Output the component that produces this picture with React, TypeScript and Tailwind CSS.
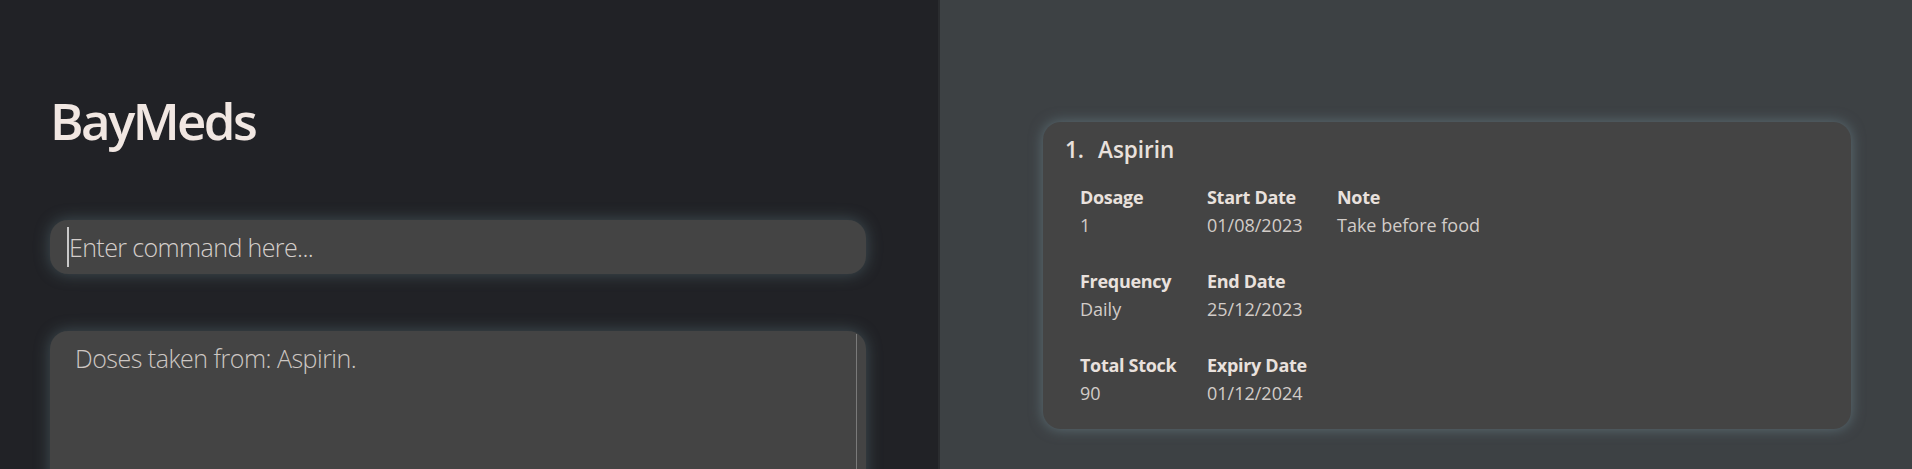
const fields = [
  [
    { label: "Dosage", value: "1" },
    { label: "Start Date", value: "01/08/2023" },
    { label: "Note", value: "Take before food" },
  ],
  [
    { label: "Frequency", value: "Daily" },
    { label: "End Date", value: "25/12/2023" },
  ],
  [
    { label: "Total Stock", value: "90" },
    { label: "Expiry Date", value: "01/12/2024" },
  ],
];

const font = { fontFamily: '"Open Sans", "Noto Sans", sans-serif' };

const App = () => {
  return (
    <div className="flex h-[469px] w-full overflow-hidden" style={font}>
      {/* command side */}
      <div className="w-[940px] shrink-0 bg-[#212226] border-r-2 border-[#2a2c2f] px-[50px] pt-[90px] pr-[72px]">
        <h1 className="text-[51px] leading-[60px] font-semibold text-[#f1e7e2] tracking-[-2.6px]">
          BayMeds
        </h1>

        <div className="mt-[70px] h-[54px] rounded-[18px] bg-[#444444] shadow-[0_0_16px_rgba(105,135,145,0.45)] flex items-center pl-[17px]">
          <span className="w-[2px] h-[40px] bg-[#c9c9c9]" />
          <span className="pt-[2px] text-[25px] font-light text-[#d4cecb] tracking-[-0.6px]">
            Enter command here...
          </span>
        </div>

        <div className="mt-[57px] h-[200px] rounded-t-[18px] bg-[#444444] shadow-[0_0_16px_rgba(105,135,145,0.45)] flex">
          <p className="flex-1 pl-[25px] pt-[9px] text-[25px] leading-[36px] font-light text-[#cdc7c3] tracking-[-0.5px]">
            Doses taken from: Aspirin.
          </p>
          <div className="w-[1px] mt-[3px] mr-[9px] bg-[#7a7a7a]" />
        </div>
      </div>

      {/* list side */}
      <div className="flex-1 bg-[#3d4144] pl-[103px] pr-[61px] pt-[122px]">
        <div className="h-[307px] rounded-[18px] bg-[#444444] shadow-[0_0_14px_rgba(120,150,160,0.55)] pl-[22px] pt-[12px]">
          <div className="text-[22.5px] leading-[32px] font-semibold text-[#e9e1dd] flex">
            <span className="w-[33px]">1.</span>
            <span>Aspirin</span>
          </div>
          <div className="mt-[19px] pl-[15px] flex flex-col gap-y-[32px]">
            {fields.map((row, i) => (
              <div key={i} className="grid grid-cols-[127px_130px_auto]">
                {row.map((f) => (
                  <div key={f.label} className="flex flex-col gap-[4px]">
                    <span className="text-[18px] leading-[24px] font-bold text-[#e9e1dd] tracking-[-0.3px]">
                      {f.label}
                    </span>
                    <span className="text-[18px] leading-[24px] text-[#d2ccc8]">
                      {f.value}
                    </span>
                  </div>
                ))}
              </div>
            ))}
          </div>
        </div>
      </div>
    </div>
  );
};

export default App;
